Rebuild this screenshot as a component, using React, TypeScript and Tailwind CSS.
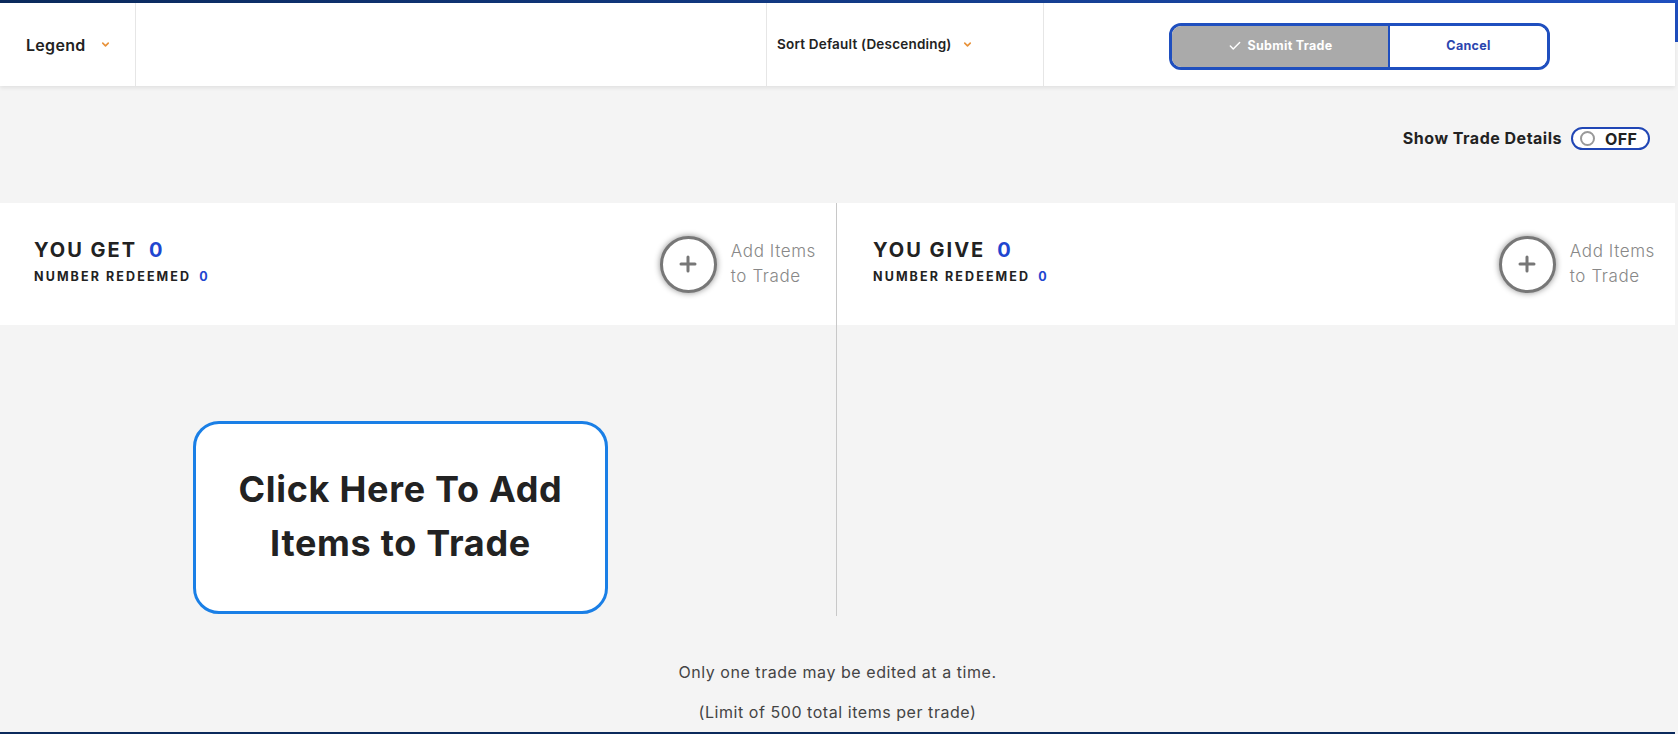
import { Check, ChevronDown, Plus } from "lucide-react";

const font = "font-['Inter','Noto_Sans',sans-serif]";

function Chevron() {
  return <ChevronDown size={11} strokeWidth={3.5} className="text-[#e8923a]" />;
}

function AddItems() {
  return (
    <button type="button" className="flex items-center gap-[14px]">
      <span className="grid size-[57px] place-items-center rounded-full border-[3px] border-[#777] bg-white shadow-[0_0_6px_rgba(0,0,0,0.45)]">
        <Plus size={24} strokeWidth={3} className="text-[#777]" />
      </span>
      <span className="text-left text-[17px] font-light leading-[25px] tracking-[0.6px] text-[#888]">
        Add Items
        <br />
        to Trade
      </span>
    </button>
  );
}

function TradeSide({ title, pad }: { title: string; pad: string }) {
  return (
    <div className={`flex h-[122px] items-center justify-between bg-white pr-[20px] ${pad}`}>
      <div className="flex flex-col pb-[6px]">
        <div className="flex items-center text-[20px] font-bold leading-[24px] tracking-[2px] text-[#222]">
          {title}
          <span className="ml-[12px] text-[#1f46d0]">0</span>
        </div>
        <div className="mt-[7px] flex items-center text-[12.5px] font-bold leading-[16px] tracking-[2.1px] text-[#222]">
          NUMBER REDEEMED
          <span className="ml-[8px] text-[#1f46d0]">0</span>
        </div>
      </div>
      <AddItems />
    </div>
  );
}

export default function App() {
  return (
    <div className={`flex h-[734px] w-[1678px] overflow-hidden bg-[#f4f4f4] ${font}`}>
      <div className="flex w-[1675px] flex-col">
        <div className="h-[3px] bg-gradient-to-r from-[#0b2a5c] via-[#123a85] to-[#1f4fbf]" />

        <header className="relative z-10 flex h-[83px] items-center bg-white shadow-[0_2px_4px_rgba(0,0,0,0.08)]">
          <div className="flex h-full w-[136px] items-center gap-[14px] border-r border-[#e6e6e6] pl-[26px]">
            <span className="text-[16px] font-semibold tracking-[0.3px] text-[#222]">Legend</span>
            <Chevron />
          </div>
          <div className="w-[630px]" />
          <div className="flex h-full w-[278px] items-center gap-[10px] border-x border-[#e6e6e6] pl-[10px]">
            <span className="text-[13.5px] font-semibold tracking-[0.2px] text-[#222]">Sort Default (Descending)</span>
            <Chevron />
          </div>
          <div className="flex h-full flex-1 items-center pl-[125px] pt-[3px]">
            <div className="flex h-[47px] w-[381px] overflow-hidden rounded-[12px] border-[3px] border-[#1f4fbf]">
              <button
                type="button"
                className="flex w-[218px] items-center justify-center gap-[6px] border-r-[2px] border-[#1f4fbf] bg-[#aaaaaa] text-[12.5px] font-bold tracking-[0.3px] text-white"
              >
                <Check size={14} strokeWidth={2.5} />
                Submit Trade
              </button>
              <button type="button" className="flex-1 bg-white text-[12.5px] font-bold tracking-[0.3px] text-[#2b45ae]">
                Cancel
              </button>
            </div>
          </div>
        </header>

        <div className="flex h-[117px] items-start justify-end gap-[9px] pr-[25px] pt-[41px]">
          <span className="text-[16px] font-bold leading-[23px] tracking-[0.5px] text-[#222]">Show Trade Details</span>
          <button
            type="button"
            className="flex h-[23px] w-[79px] items-center gap-[10px] rounded-full border-2 border-[#2046b5] bg-white pl-[7px]"
          >
            <span className="size-[15px] rounded-full border-2 border-[#999]" />
            <span className="text-[16px] font-bold tracking-[0.4px] text-[#222]">OFF</span>
          </button>
        </div>

        <div className="flex h-[413px]">
          <div className="flex w-[837px] flex-col border-r border-[#c8c8c8]">
            <TradeSide title="YOU GET" pad="pl-[34px]" />
            <div className="pl-[193px] pt-[96px]">
              <button
                type="button"
                className="flex h-[193px] w-[415px] items-center justify-center rounded-[26px] border-[3px] border-[#1a7fe6] bg-white pb-[3px] text-[36px] font-bold leading-[54px] tracking-[0.7px] text-[#222]"
              >
                Click Here To Add
                <br />
                Items to Trade
              </button>
            </div>
          </div>
          <div className="flex flex-1 flex-col">
            <TradeSide title="YOU GIVE" pad="pl-[36px]" />
          </div>
        </div>

        <div className="flex flex-1 flex-col items-center pt-[46px] text-[16px] leading-[20px] tracking-[0.55px] text-[#444]">
          <p>Only one trade may be edited at a time.</p>
          <p className="mt-[20px]">(Limit of 500 total items per trade)</p>
        </div>

        <div className="h-[2px] bg-[#0b2a5c]" />
      </div>
      <div className="flex w-[3px] flex-col">
        <div className="h-[42px] bg-[#1f4fbf]" />
      </div>
    </div>
  );
}
